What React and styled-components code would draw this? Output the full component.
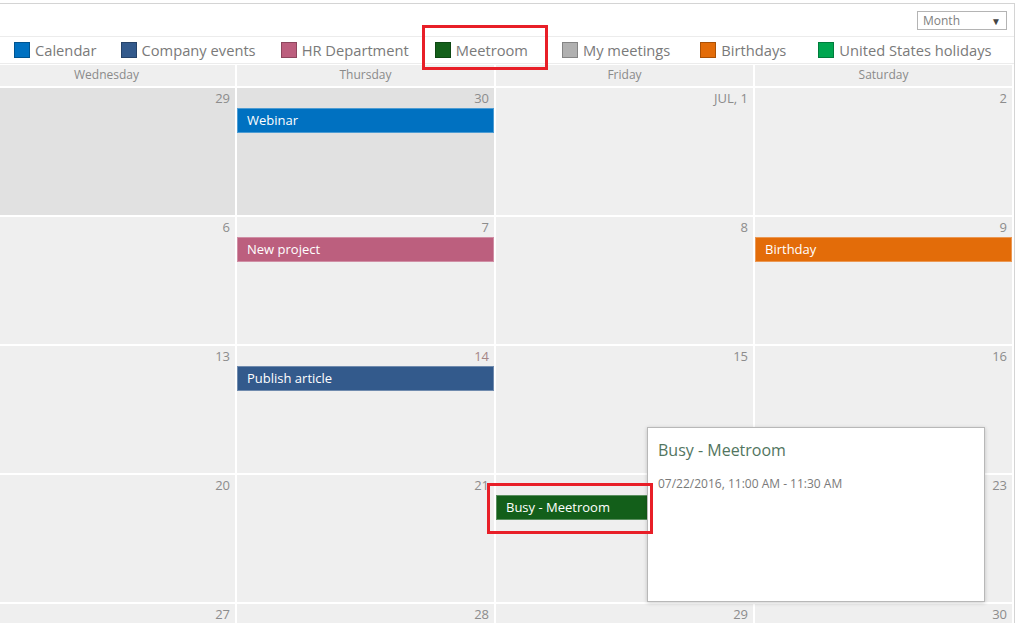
import React from 'react';
import styled, { createGlobalStyle } from 'styled-components';

const GlobalStyle = createGlobalStyle`
  html, body {
    margin: 0;
    padding: 0;
    background: #ffffff;
  }
  body {
    font-family: "Open Sans", "Liberation Sans", sans-serif;
  }
`;

const COLOR = {
  calendar: '#0071c1',
  company: '#335a8c',
  hr: '#bc5f7e',
  meetroom: '#135f1a',
  meetings: '#b0b0b0',
  birthdays: '#e36c09',
  holidays: '#00a650',
};

const Page = styled.div`
  position: relative;
  width: 1024px;
  height: 623px;
  overflow: hidden;
`;

const Frame = styled.div`
  margin-top: 3px;
  width: 1014px;
  border-top: 1px solid #d4d4d4;
  border-right: 1px solid #d4d4d4;
  overflow: hidden;
`;

const Toolbar = styled.div`
  height: 33px;
  display: flex;
  justify-content: flex-end;
  align-items: flex-start;
  padding: 7px 7px 0 0;
  box-sizing: border-box;
  border-bottom: 1px solid #ececec;
`;

const ViewSelect = styled.div`
  width: 90px;
  height: 19px;
  box-sizing: border-box;
  border: 1px solid #b4b4b4;
  display: flex;
  align-items: center;
  justify-content: space-between;
  padding: 0 5px;
  font-size: 12px;
  color: #808080;
`;

const Caret = styled.span`
  font-size: 10px;
  color: #444;
`;

const Legend = styled.div`
  height: 26px;
  display: flex;
  align-items: center;
  padding-left: 14px;
  border-bottom: 1px solid #ececec;
`;

const LegendItem = styled.div`
  display: flex;
  align-items: center;
  gap: 5px;
  margin-left: ${(p) => p.$space}px;
  font-size: 14.7px;
  color: #7a7a7a;
  white-space: nowrap;
`;

const Swatch = styled.span`
  width: 16px;
  height: 16px;
  box-sizing: border-box;
  border: 1px solid rgba(0, 0, 0, 0.25);
  background: ${(p) => p.$color};
`;

const Grid = styled.div`
  margin-top: 1px;
  margin-left: -22px;
  display: grid;
  grid-template-columns: repeat(4, 257px);
  grid-template-rows: 21px;
  grid-auto-rows: 127px;
  gap: 2px;
`;

const DayName = styled.div`
  background: #efefef;
  font-size: 12px;
  color: #8a8a8a;
  text-align: center;
  line-height: 20px;
`;

const Cell = styled.div`
  background: ${(p) => (p.$outside ? '#e1e1e1' : '#efefef')};
  display: flex;
  flex-direction: column;
`;

const DateNum = styled.div`
  height: 20px;
  box-sizing: border-box;
  padding: 1px 5px 0 0;
  text-align: right;
  font-size: 13px;
  line-height: 18px;
  color: ${(p) => (p.$today ? '#a58686' : '#8c8c8c')};
`;

const EventBar = styled.div`
  height: 25px;
  box-sizing: border-box;
  background: ${(p) => p.$color};
  box-shadow: inset 0 0 0 1px rgba(255, 255, 255, 0.3);
  color: #ffffff;
  font-size: 13px;
  line-height: 25px;
  padding-left: 10px;
  white-space: nowrap;
  overflow: hidden;
`;

const Popup = styled.div`
  position: absolute;
  left: 647px;
  top: 427px;
  width: 338px;
  height: 175px;
  box-sizing: border-box;
  background: #ffffff;
  border: 1px solid #b8b8b8;
  box-shadow: 0 1px 4px rgba(0, 0, 0, 0.2);
  padding: 11px 10px;
`;

const PopupTitle = styled.div`
  font-size: 16px;
  line-height: 22px;
  color: #527560;
`;

const PopupTime = styled.div`
  margin-top: 14px;
  font-size: 12px;
  line-height: 17px;
  color: #7a7a7a;
`;

const Highlight = styled.div`
  position: absolute;
  left: ${(p) => p.$x}px;
  top: ${(p) => p.$y}px;
  width: ${(p) => p.$w}px;
  height: ${(p) => p.$h}px;
  box-sizing: border-box;
  border: 3px solid #e81f28;
  pointer-events: none;
`;

const legend = [
  ['Calendar', COLOR.calendar, 0],
  ['Company events', COLOR.company, 24],
  ['HR Department', COLOR.hr, 25],
  ['Meetroom', COLOR.meetroom, 26],
  ['My meetings', COLOR.meetings, 34],
  ['Birthdays', COLOR.birthdays, 30],
  ['United States holidays', COLOR.holidays, 32],
];

const days = ['Wednesday', 'Thursday', 'Friday', 'Saturday'];

const weeks = [
  [
    { d: '29', outside: true },
    { d: '30', outside: true, event: ['Webinar', COLOR.calendar] },
    { d: 'JUL, 1' },
    { d: '2' },
  ],
  [
    { d: '6' },
    { d: '7', event: ['New project', COLOR.hr] },
    { d: '8' },
    { d: '9', event: ['Birthday', COLOR.birthdays] },
  ],
  [
    { d: '13' },
    { d: '14', today: true, event: ['Publish article', COLOR.company] },
    { d: '15' },
    { d: '16' },
  ],
  [
    { d: '20' },
    { d: '21' },
    { d: '22', event: ['Busy - Meetroom', COLOR.meetroom] },
    { d: '23' },
  ],
  [{ d: '27' }, { d: '28' }, { d: '29' }, { d: '30' }],
];

export default function App() {
  return (
    <Page>
      <GlobalStyle />
      <Frame>
        <Toolbar>
          <ViewSelect>
            Month
            <Caret>▼</Caret>
          </ViewSelect>
        </Toolbar>
        <Legend>
          {legend.map(([name, color, space]) => (
            <LegendItem key={name} $space={space}>
              <Swatch $color={color} />
              {name}
            </LegendItem>
          ))}
        </Legend>
        <Grid>
          {days.map((day) => (
            <DayName key={day}>{day}</DayName>
          ))}
          {weeks.flat().map((cell, i) => (
            <Cell key={i} $outside={cell.outside}>
              <DateNum $today={cell.today}>{cell.d}</DateNum>
              {cell.event && <EventBar $color={cell.event[1]}>{cell.event[0]}</EventBar>}
            </Cell>
          ))}
        </Grid>
      </Frame>
      <Popup>
        <PopupTitle>Busy - Meetroom</PopupTitle>
        <PopupTime>07/22/2016, 11:00 AM - 11:30 AM</PopupTime>
      </Popup>
      <Highlight $x={422} $y={25} $w={126} $h={45} />
      <Highlight $x={487} $y={483} $w={166} $h={51} />
    </Page>
  );
}
